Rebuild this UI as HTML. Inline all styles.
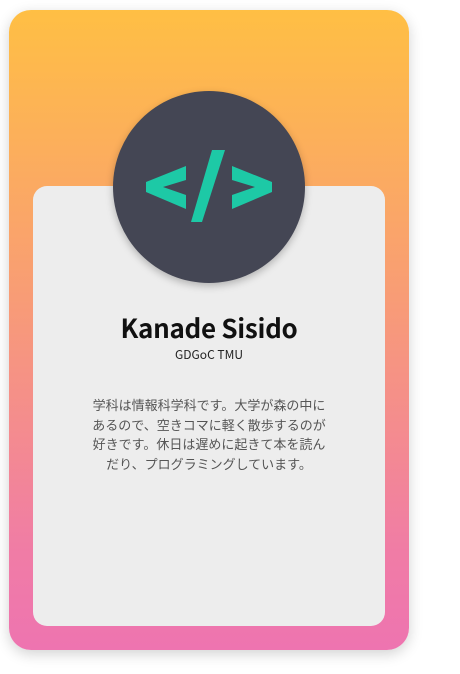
<!DOCTYPE html>
<html><head><meta charset="utf-8"><style>
html,body{margin:0;padding:0;background:#fff;width:460px;height:674px;overflow:hidden;font-family:"Liberation Sans","Noto Sans CJK JP",sans-serif}
.card{position:absolute;left:9px;top:10px;width:400px;height:640px;border-radius:22px;background:linear-gradient(180deg,#FFBF44 0%,#F9A070 40%,#F07CA6 85%,#EE74B0 100%);box-shadow:0 4px 14px rgba(0,0,0,0.18)}
.panel{position:absolute;left:33px;top:186px;width:352px;height:440px;border-radius:14px;background:#EDEDED}
.circle{position:absolute;left:113px;top:91px;width:192px;height:192px;border-radius:50%;background:#444654;box-shadow:0 3px 8px rgba(0,0,0,0.25)}
.name{position:absolute;left:0;width:418px;top:309px;text-align:center;font-size:26px;font-weight:bold;color:#111;font-family:"Noto Sans CJK JP","Liberation Sans",sans-serif;letter-spacing:-0.3px}
.sub{position:absolute;left:0;width:418px;top:346px;text-align:center;font-size:12px;color:#222;font-family:"Noto Sans CJK JP","Liberation Sans",sans-serif}
.desc{position:absolute;left:60px;width:298px;top:395px;text-align:center;font-size:13px;line-height:19.5px;color:#555;font-family:"Noto Sans CJK JP","Liberation Sans",sans-serif;white-space:nowrap}
svg{position:absolute;left:0;top:0}
</style></head><body>
<div class="card"></div>
<div class="panel"></div>
<div class="circle"></div>
<svg width="460" height="674"><g fill="#1DC9A6">
<polygon points="186,166 146,182 146,192 186,209 186,195 163,187 186,180"/>
<polygon points="212,150 225,150 202,222 191,222"/>
<polygon points="232,166 272,182 272,192 232,209 232,195 255,187 232,180"/>
</g></svg>
<div class="name">Kanade Sisido</div>
<div class="sub">GDGoC TMU</div>
<div class="desc">学科は情報科学科です。大学が森の中に<br>あるので、空きコマに軽く散歩するのが<br>好きです。休日は遅めに起きて本を読ん<br>だり、プログラミングしています。</div>
</body></html>
